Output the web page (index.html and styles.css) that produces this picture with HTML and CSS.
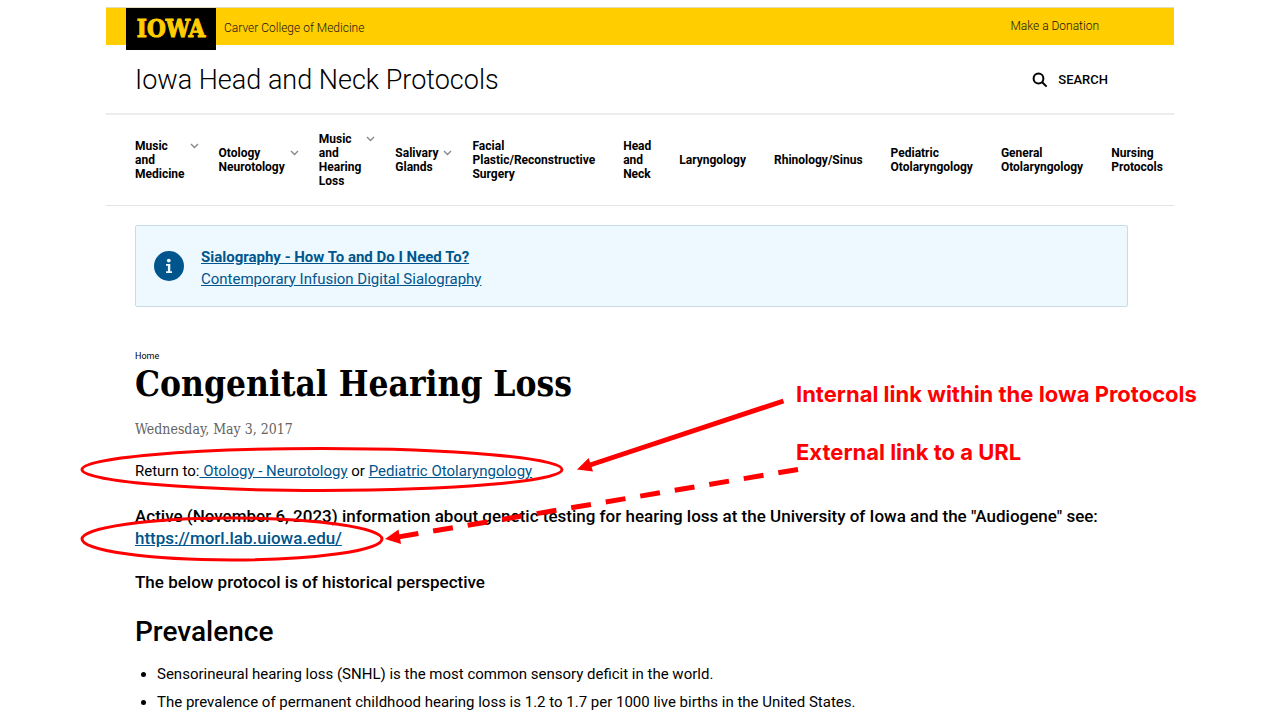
FILE: index.html
```html
<!DOCTYPE html>
<html lang="en">
<head>
<meta charset="utf-8">
<title>Congenital Hearing Loss | Iowa Head and Neck Protocols</title>
<link rel="stylesheet" href="styles.css">
</head>
<body>
<div class="page">
  <header>
    <div class="brand-bar">
      <a class="logo" href="#">IOWA</a>
      <a class="college" href="#">Carver College of Medicine</a>
      <a class="donate" href="#">Make a Donation</a>
    </div>
    <div class="site-bar">
      <a class="site-name" href="#">Iowa Head and Neck Protocols</a>
      <button class="search" type="button">
        <svg width="16" height="16" viewBox="0 0 16 16" aria-hidden="true"><circle cx="6.5" cy="6.5" r="4.9"/><path d="M10 10l4.6 4.6"/></svg>
        SEARCH
      </button>
    </div>
    <nav class="menu" aria-label="Main">
      <a class="item has-sub" href="#"><span>Music<br>and<br>Medicine</span><svg class="chevron" viewBox="0 0 9 6" aria-hidden="true"><path d="M1 1l3.5 3.5L8 1"/></svg></a>
      <a class="item has-sub" href="#"><span>Otology<br>Neurotology</span><svg class="chevron" viewBox="0 0 9 6" aria-hidden="true"><path d="M1 1l3.5 3.5L8 1"/></svg></a>
      <a class="item has-sub" href="#"><span>Music<br>and<br>Hearing<br>Loss</span><svg class="chevron" viewBox="0 0 9 6" aria-hidden="true"><path d="M1 1l3.5 3.5L8 1"/></svg></a>
      <a class="item has-sub" href="#"><span>Salivary<br>Glands</span><svg class="chevron" viewBox="0 0 9 6" aria-hidden="true"><path d="M1 1l3.5 3.5L8 1"/></svg></a>
      <a class="item" href="#">Facial<br>Plastic/Reconstructive<br>Surgery</a>
      <a class="item" href="#">Head<br>and<br>Neck</a>
      <a class="item" href="#">Laryngology</a>
      <a class="item" href="#">Rhinology/Sinus</a>
      <a class="item" href="#">Pediatric<br>Otolaryngology</a>
      <a class="item" href="#">General<br>Otolaryngology</a>
      <a class="item" href="#">Nursing<br>Protocols</a>
    </nav>
  </header>
  <main>
    <aside class="notice">
      <svg class="info" viewBox="0 0 30 30" aria-hidden="true"><circle cx="15" cy="15" r="15"/><circle class="mark" cx="14.8" cy="9.6" r="1.9"/><path class="mark" d="M12 13h4.300v7.200H18V22h-6v-1.800h1.900v-5.400H12z"/></svg>
      <div class="notice-links">
        <a href="#"><b>Sialography - How To and Do I Need To?</b></a>
        <a href="#">Contemporary Infusion Digital Sialography</a>
      </div>
    </aside>
    <a class="crumb" href="#">Home</a>
    <h1>Congenital Hearing Loss</h1>
    <p class="date">Wednesday, May 3, 2017</p>
    <p class="return">Return to:<a href="#"> Otology - Neurotology</a> or <a href="#">Pediatric Otolaryngology</a></p>
    <p class="lead">Active (November 6, 2023) information about genetic testing for hearing loss at the University of Iowa and the "Audiogene" see:<br><a href="#">https://morl.lab.uiowa.edu/</a></p>
    <p class="lead">The below protocol is of historical perspective</p>
    <h2>Prevalence</h2>
    <ul>
      <li>Sensorineural hearing loss (SNHL) is the most common sensory deficit in the world.</li>
      <li>The prevalence of permanent childhood hearing loss is 1.2 to 1.7 per 1000 live births in the United States.</li>
    </ul>
  </main>
</div>
<svg class="marks" width="1280" height="720" viewBox="0 0 1280 720" aria-hidden="true">
  <ellipse cx="322" cy="469.500" rx="240" ry="21"/>
  <ellipse cx="232" cy="539" rx="150" ry="21"/>
  <path class="shaft" d="M783.500 401L590 465"/>
  <path class="head" d="M577 469.500L588.700 458L593 471.600z"/>
  <path class="shaft dashed" d="M798 469.500L395 537.500"/>
  <path class="head" d="M385 539L398.500 529.500L401 544z"/>
</svg>
<p class="note note-internal">Internal link within the Iowa Protocols</p>
<p class="note note-external">External link to a URL</p>
</body>
</html>
```
FILE: styles.css
```css
* { box-sizing: border-box; }
body {
  margin: 0;
  position: relative;
  min-height: 100vh;
  overflow: hidden;
  background: #fff;
  color: #000;
  font-family: Roboto, "Liberation Sans", sans-serif;
  font-size: 15px;
  line-height: 22px;
}
a { color: #00558c; }
p, h1, h2, ul { margin: 0; }
.page { padding: 7px 106px 0; }

.brand-bar {
  display: flex;
  align-items: flex-start;
  height: 38px;
  padding: 0 75px 0 20px;
  background: #ffcd00;
  border-top: 1px solid #e3dcc0;
  font-size: 12px;
  font-weight: 300;
  line-height: 40px;
}
.brand-bar a { color: #151515; text-decoration: none; }
.brand-bar .logo {
  width: 90px;
  height: 42px;
  margin-right: 8px;
  background: #000;
  color: #ffcd00;
  font-family: "DejaVu Serif Condensed", "DejaVu Serif", serif;
  font-size: 24px;
  font-weight: 700;
  line-height: 42px;
  text-align: center;
  -webkit-text-stroke: 1px #ffcd00;
}
.donate { margin-left: auto; line-height: 36px; }

.site-bar {
  display: flex;
  align-items: center;
  justify-content: space-between;
  height: 70px;
  padding: 2px 66px 0 29px;
  border-bottom: 2px solid #ececec;
}
.site-name {
  color: #000;
  font-size: 27px;
  font-weight: 300;
  line-height: 32px;
  text-decoration: none;
}
.search {
  display: flex;
  align-items: center;
  gap: 10px;
  padding: 0;
  border: 0;
  background: none;
  color: #000;
  font: 500 13px/16px Roboto, sans-serif;
}
.search svg { fill: none; stroke: #000; stroke-width: 2; }

.menu {
  display: flex;
  align-items: center;
  justify-content: space-between;
  height: 91px;
  padding: 0 11px 0 29px;
  border-bottom: 1px solid #e4e4e4;
}
.item {
  display: flex;
  color: #000;
  font-size: 12px;
  font-weight: 700;
  line-height: 14px;
  text-decoration: none;
}
.has-sub { gap: 5px; margin-right: -8px; }
.chevron {
  width: 9px;
  height: 6px;
  margin-top: 4px;
  fill: none;
  stroke: #888;
  stroke-width: 1.4;
}

main { padding: 19px 46px 0 29px; }
.notice {
  display: flex;
  align-items: center;
  gap: 17px;
  height: 82px;
  margin-bottom: 43px;
  padding: 3px 18px 0;
  background: #edf8ff;
  border: 1px solid #c8dce8;
  border-radius: 2px;
}
.info { width: 30px; height: 30px; margin-bottom: 3px; fill: #00558c; }
.info .mark { fill: #edf8ff; }
.notice-links { display: flex; flex-direction: column; }
.crumb {
  display: block;
  color: #000;
  font-size: 9px;
  line-height: 12px;
  text-decoration: none;
}
h1 {
  font-family: "DejaVu Serif Condensed", "DejaVu Serif", serif;
  font-size: 35px;
  font-weight: 700;
  line-height: 44px;
}
.date {
  margin-top: 12px;
  color: #636363;
  font-family: "DejaVu Serif Condensed", "DejaVu Serif", serif;
  font-size: 14px;
}
.return { margin-top: 20px; }
.lead {
  margin-top: 22px;
  font-size: 17px;
  font-weight: 500;
  white-space: nowrap;
}
.return + .lead { margin-top: 23px; }
h2 {
  margin-top: 21px;
  font-size: 28px;
  font-weight: 500;
  line-height: 36px;
}
ul { margin-top: 13px; padding-left: 22px; }
li { margin-bottom: 6px; }

.marks { position: absolute; left: 0; top: 0; pointer-events: none; }
.marks ellipse { fill: none; stroke: #f00; stroke-width: 3; }
.shaft { fill: none; stroke: #f00; stroke-width: 5; }
.dashed { stroke-dasharray: 20 15; }
.head { fill: #f00; }
.note {
  position: absolute;
  left: 796px;
  color: #f00;
  font-family: Inter, sans-serif;
  font-size: 22px;
  font-weight: 700;
  line-height: 28px;
  white-space: nowrap;
}
.note-internal { top: 380px; }
.note-external { top: 438px; }
```
